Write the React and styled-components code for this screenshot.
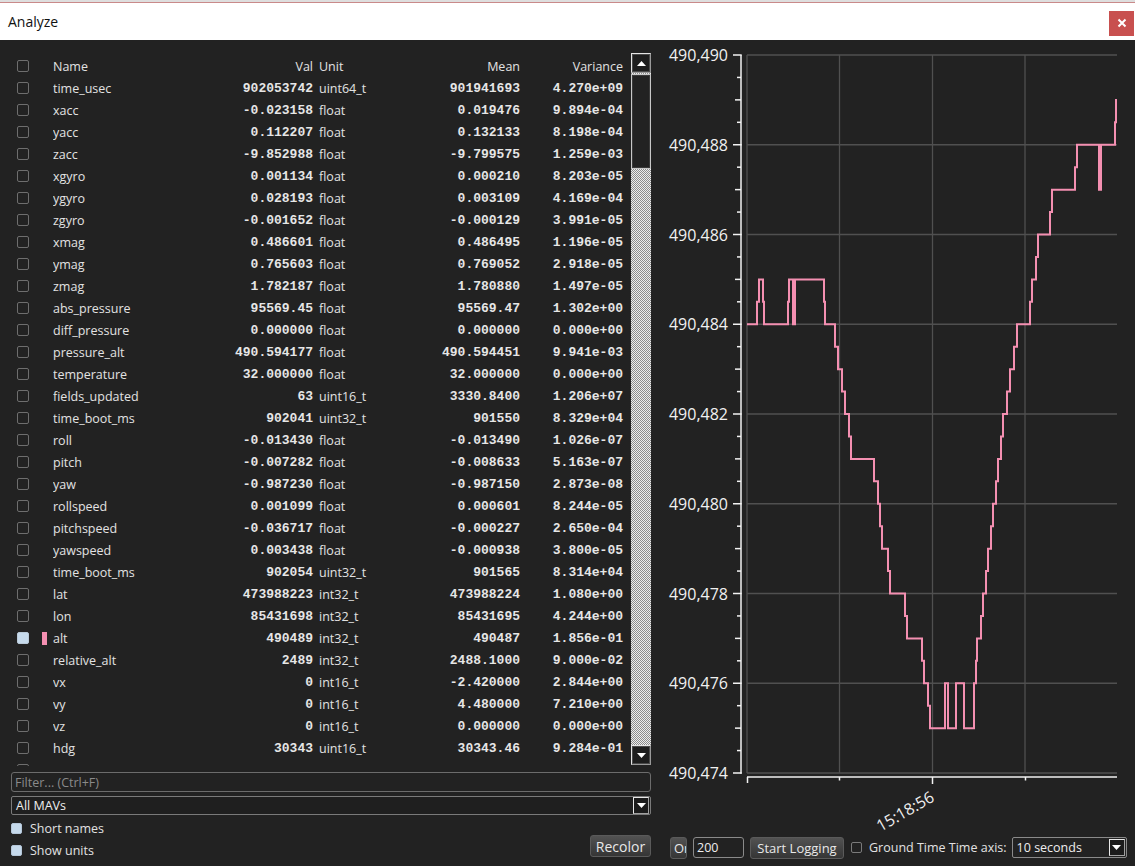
import React from "react";
import styled, { createGlobalStyle } from "styled-components";

const Global = createGlobalStyle`
  html, body { margin: 0; padding: 0; background: #222222; }
  body { width: 1135px; height: 866px; overflow: hidden; font-family: "Open Sans", "Noto Sans", sans-serif; }
  * { box-sizing: border-box; }
`;

const Window = styled.div`
  width: 1135px;
  height: 866px;
  display: flex;
  flex-direction: column;
  background: #222222;
`;

const TitleBar = styled.div`
  height: 40px;
  flex: 0 0 40px;
  background: #ffffff;
  border-top: 2px solid #dedede;
  box-shadow: inset 0 1px 0 #c98a8a;
  display: flex;
  align-items: center;
  justify-content: space-between;
  padding: 0 1px 0 8px;
`;

const Title = styled.span`
  font-size: 14px;
  color: #111;
  margin-top: 1px;
`;

const CloseBtn = styled.div`
  width: 25px;
  height: 25px;
  background: #c8504f;
  display: flex;
  align-items: center;
  justify-content: center;
  margin-top: 4px;
`;

const Main = styled.div`
  flex: 1;
  display: flex;
  min-height: 0;
`;

const LeftPanel = styled.div`
  width: 660px;
  flex: 0 0 660px;
  padding: 13px 9px 0 11px;
  display: flex;
  flex-direction: column;
`;

const TableArea = styled.div`
  height: 713px;
  flex: 0 0 713px;
  display: flex;
`;

const Rows = styled.div`
  flex: 1;
  overflow: hidden;
  padding-top: 2px;
`;

const Row = styled.div`
  height: 22px;
  display: grid;
  grid-template-columns: 12px 13px 5px 6px 180px 80px 6px 80px 121px 103px;
  align-items: center;
  padding-left: 6px;
  color: #e2e2e2;
  font-size: 12.5px;
  white-space: nowrap;
`;

const Check = styled.span`
  width: 12px;
  height: 12px;
  border-radius: 2px;
  border: 1px solid ${p => (p.$on ? "#b9c9d8" : "#6e6e6e")};
  background: ${p => (p.$on ? "#c6daec" : "transparent")};
  grid-column: 1;
`;

const Swatch = styled.span`
  grid-column: 3;
  width: 5px;
  height: 13px;
  background: ${p => p.$color || "transparent"};
`;

const NameCell = styled.span`
  grid-column: 5;
  overflow: hidden;
`;

const NumCell = styled.span`
  grid-column: ${p => p.$col};
  text-align: right;
  font-family: "Liberation Mono", "Courier New", monospace;
  font-weight: bold;
  font-size: 13px;
  color: #e6e6e6;
`;

const HeadRight = styled.span`
  grid-column: ${p => p.$col};
  text-align: right;
`;

const UnitCell = styled.span`
  grid-column: 8;
`;

const ScrollBar = styled.div`
  width: 20px;
  flex: 0 0 20px;
  display: flex;
  flex-direction: column;
  padding-bottom: 1px;
`;

const ScrollBtn = styled.div`
  height: 20px;
  flex: 0 0 20px;
  background: #1d1d1d;
  border: 1px solid #e4e4e4;
  border-right-color: #9a9a9a;
  border-bottom-color: #9a9a9a;
  box-shadow: inset 0 0 0 1px #4a4a4a;
  display: flex;
  align-items: center;
  justify-content: center;
`;

const Track = styled.div`
  flex: 1;
  display: flex;
  flex-direction: column;
  background: repeating-conic-gradient(#ededed 0 25%, #8c8c8c 0 50%) 0 0 / 2px 2px;
`;

const Thumb = styled.div`
  height: 95px;
  margin-top: 1px;
  background: #222;
  border: 1px solid #c8c8c8;
  box-shadow: inset 0 0 0 1px #3a3a3a;
`;

const FilterInput = styled.div`
  margin-top: 6px;
  height: 20px;
  border: 1px solid #6c6c6c;
  border-radius: 3px;
  padding: 0 3px;
  font-size: 12.5px;
  color: #8a8a8a;
  display: flex;
  align-items: center;
`;

const Combo = styled.div`
  margin-top: 4px;
  height: 19px;
  border: 1px solid #7a7a7a;
  border-radius: 2px;
  background: #1f1f1f;
  padding: 0 1px 0 4px;
  font-size: 12.5px;
  color: #eeeeee;
  display: flex;
  align-items: center;
  justify-content: space-between;
`;

const ArrowBox = styled.span`
  width: 16px;
  height: 17px;
  border: 1px solid #e8e8e8;
  border-right-color: #a0a0a0;
  border-bottom-color: #a0a0a0;
  background: #1b1b1b;
  display: flex;
  align-items: center;
  justify-content: center;
`;

const BottomArea = styled.div`
  margin-top: 2px;
  display: flex;
  align-items: flex-end;
  justify-content: space-between;
`;

const CheckList = styled.div`
  display: flex;
  flex-direction: column;
`;

const CheckRow = styled.label`
  height: 22px;
  display: flex;
  align-items: center;
  gap: 8px;
  font-size: 12.5px;
  color: #e2e2e2;
`;

const SmallCheck = styled.span`
  width: 11px;
  height: 11px;
  border-radius: 2px;
  border: 1px solid ${p => (p.$on ? "#b4c6d8" : "#7a7a7a")};
  background: ${p => (p.$on ? "#c6daec" : "transparent")};
`;

const Button = styled.div`
  height: 22px;
  width: ${p => p.$w}px;
  flex: 0 0 ${p => p.$w}px;
  border: 1px solid #5a5a5a;
  border-radius: 3px;
  background: linear-gradient(#525252, #353535);
  color: #e8e8e8;
  font-size: ${p => p.$fs || 13}px;
  display: flex;
  align-items: center;
  justify-content: ${p => (p.$left ? "flex-start" : "center")};
  padding-left: ${p => (p.$left ? 3 : 0)}px;
  overflow: hidden;
  white-space: nowrap;
  margin-bottom: ${p => p.$mb || 0}px;
`;

const RightPanel = styled.div`
  flex: 1;
  display: flex;
  flex-direction: column;
`;

const Chart = styled.svg`
  display: block;
  width: 475px;
  height: 792px;
  flex: 0 0 792px;
  font-family: "Open Sans", "Noto Sans", sans-serif;
`;

const Controls = styled.div`
  margin-top: 5px;
  height: 21px;
  display: flex;
  align-items: center;
  padding-left: 10px;
  font-size: 12.5px;
  color: #e2e2e2;
  white-space: nowrap;
`;

const NumInput = styled.div`
  width: 51px;
  height: 21px;
  margin-left: 6px;
  border: 1px solid #8a8a8a;
  border-radius: 3px;
  padding-left: 3px;
  display: flex;
  align-items: center;
  color: #eeeeee;
`;

const Select = styled.div`
  width: 115px;
  height: 21px;
  margin-left: 5px;
  border: 1px solid #8a8a8a;
  border-radius: 2px;
  padding: 0 1px 0 4px;
  display: flex;
  align-items: center;
  justify-content: space-between;
  color: #eeeeee;
`;

const Label = styled.span`
  margin-left: 7px;
`;

const rows = [
  ["time_usec", "902053742", "uint64_t", "901941693", "4.270e+09"],
  ["xacc", "-0.023158", "float", "0.019476", "9.894e-04"],
  ["yacc", "0.112207", "float", "0.132133", "8.198e-04"],
  ["zacc", "-9.852988", "float", "-9.799575", "1.259e-03"],
  ["xgyro", "0.001134", "float", "0.000210", "8.203e-05"],
  ["ygyro", "0.028193", "float", "0.003109", "4.169e-04"],
  ["zgyro", "-0.001652", "float", "-0.000129", "3.991e-05"],
  ["xmag", "0.486601", "float", "0.486495", "1.196e-05"],
  ["ymag", "0.765603", "float", "0.769052", "2.918e-05"],
  ["zmag", "1.782187", "float", "1.780880", "1.497e-05"],
  ["abs_pressure", "95569.45", "float", "95569.47", "1.302e+00"],
  ["diff_pressure", "0.000000", "float", "0.000000", "0.000e+00"],
  ["pressure_alt", "490.594177", "float", "490.594451", "9.941e-03"],
  ["temperature", "32.000000", "float", "32.000000", "0.000e+00"],
  ["fields_updated", "63", "uint16_t", "3330.8400", "1.206e+07"],
  ["time_boot_ms", "902041", "uint32_t", "901550", "8.329e+04"],
  ["roll", "-0.013430", "float", "-0.013490", "1.026e-07"],
  ["pitch", "-0.007282", "float", "-0.008633", "5.163e-07"],
  ["yaw", "-0.987230", "float", "-0.987150", "2.873e-08"],
  ["rollspeed", "0.001099", "float", "0.000601", "8.244e-05"],
  ["pitchspeed", "-0.036717", "float", "-0.000227", "2.650e-04"],
  ["yawspeed", "0.003438", "float", "-0.000938", "3.800e-05"],
  ["time_boot_ms", "902054", "uint32_t", "901565", "8.314e+04"],
  ["lat", "473988223", "int32_t", "473988224", "1.080e+00"],
  ["lon", "85431698", "int32_t", "85431695", "4.244e+00"],
  ["alt", "490489", "int32_t", "490487", "1.856e-01", true],
  ["relative_alt", "2489", "int32_t", "2488.1000", "9.000e-02"],
  ["vx", "0", "int16_t", "-2.420000", "2.844e+00"],
  ["vy", "0", "int16_t", "4.480000", "7.210e+00"],
  ["vz", "0", "int16_t", "0.000000", "0.000e+00"],
  ["hdg", "30343", "uint16_t", "30343.46", "9.284e-01"],
];

const PINK = "#f48fb1";
const yOf = v => 773 - (v - 474) * 44.875;

const steps = [
  [757, 484.5], [759, 485], [763, 484.5], [764, 484],
  [788, 484.5], [789, 485], [793, 484], [795, 485],
  [824, 484.5], [825, 484],
  [835, 483.5], [838, 483], [842, 482.5], [845, 482], [849, 481.5], [851, 481],
  [874, 480.5], [878, 480], [880, 479.5], [882, 479], [888, 478.5], [890, 478],
  [905, 477.5], [907, 477], [922, 476.5], [924, 476], [928, 475.5], [930, 475],
  [945, 476], [948, 475], [956, 476], [964, 475],
  [974, 476], [976, 476.5], [977, 477], [981, 477.5], [983, 478], [986, 478.5], [988, 479],
  [991, 479.5], [993, 480], [996, 480.5], [998, 481], [1001, 481.5], [1003, 482],
  [1007, 482.5], [1010, 483], [1014, 483.5], [1017, 484],
  [1030, 484.5], [1032, 485], [1036, 485.5], [1038, 486], [1050, 486.5], [1052, 487],
  [1075, 487.5], [1077, 488], [1099, 487], [1101, 488], [1115, 488.5], [1116, 489],
];

const curve =
  `M747 ${yOf(484)}` + steps.map(([x, v]) => ` H${x} V${yOf(v)}`).join("") + " H1117";

const majors = [490, 488, 486, 484, 482, 480, 478, 476, 474];
const vGrid = [747, 839.5, 932.5, 1025];

function ChartView() {
  const minor = [];
  for (let v = 474; v < 490; v += 0.5) {
    const isMajor = Math.abs(v - Math.round(v)) < 0.01 && Math.round(v) % 2 === 0;
    if (isMajor) continue;
    const mid = Math.abs(v - Math.round(v)) < 0.01;
    minor.push(
      <line key={v} x1={mid ? 735 : 737} x2={741} y1={yOf(v)} y2={yOf(v)} stroke="#f2f2f2" strokeWidth="1.5" />
    );
  }
  return (
    <Chart viewBox="660 40 475 792">
      {majors.map(v => (
        <line key={"g" + v} x1={747} x2={1117} y1={yOf(v)} y2={yOf(v)} stroke="#505050" strokeWidth="1.3" />
      ))}
      {vGrid.map(x => (
        <line key={"v" + x} x1={x} x2={x} y1={55} y2={773} stroke="#505050" strokeWidth="1.3" />
      ))}
      <line x1={741} x2={741} y1={55} y2={773.7} stroke="#f2f2f2" strokeWidth="1.5" />
      {majors.map(v => (
        <line key={"t" + v} x1={733} x2={741.7} y1={yOf(v)} y2={yOf(v)} stroke="#f2f2f2" strokeWidth="1.5" />
      ))}
      {minor}
      {majors.map(v => (
        <text key={"l" + v} x={728} y={yOf(v) + 6} textAnchor="end" fontSize="16" fill="#f0f0f0">
          {"490," + String(v)}
        </text>
      ))}
      <line x1={747} x2={1117} y1={777} y2={777} stroke="#f2f2f2" strokeWidth="1.5" />
      <line x1={747.5} x2={747.5} y1={777} y2={783} stroke="#f2f2f2" strokeWidth="1.5" />
      <line x1={839.5} x2={839.5} y1={777} y2={780.5} stroke="#f2f2f2" strokeWidth="1.5" />
      <line x1={932.5} x2={932.5} y1={777} y2={784} stroke="#f2f2f2" strokeWidth="1.5" />
      <line x1={1025.5} x2={1025.5} y1={777} y2={780.5} stroke="#f2f2f2" strokeWidth="1.5" />
      <text x={905} y={817} textAnchor="middle" fontSize="16" fill="#f0f0f0" transform="rotate(-30 905 811)">
        15:18:56
      </text>
      <path d={curve} fill="none" stroke={PINK} strokeWidth="2" strokeLinejoin="miter" />
    </Chart>
  );
}

const TriUp = () => (
  <svg width="9" height="5" viewBox="0 0 9 5"><polygon points="0,5 9,5 4.5,0" fill="#ffffff" /></svg>
);
const TriDown = () => (
  <svg width="9" height="5" viewBox="0 0 9 5"><polygon points="0,0 9,0 4.5,5" fill="#ffffff" /></svg>
);

export default function App() {
  return (
    <Window>
      <Global />
      <TitleBar>
        <Title>Analyze</Title>
        <CloseBtn>
          <svg width="10" height="10" viewBox="0 0 10 10">
            <path d="M1.5 1.5 L8.5 8.5 M8.5 1.5 L1.5 8.5" stroke="#ffffff" strokeWidth="2" />
          </svg>
        </CloseBtn>
      </TitleBar>
      <Main>
        <LeftPanel>
          <TableArea>
            <Rows>
              <Row>
                <Check />
                <NameCell>Name</NameCell>
                <HeadRight $col={6}>Val</HeadRight>
                <UnitCell>Unit</UnitCell>
                <HeadRight $col={9}>Mean</HeadRight>
                <HeadRight $col={10}>Variance</HeadRight>
              </Row>
              {rows.map((r, i) => (
                <Row key={i}>
                  <Check $on={r[5]} />
                  <Swatch $color={r[5] ? PINK : null} />
                  <NameCell>{r[0]}</NameCell>
                  <NumCell $col={6}>{r[1]}</NumCell>
                  <UnitCell>{r[2]}</UnitCell>
                  <NumCell $col={9}>{r[3]}</NumCell>
                  <NumCell $col={10}>{r[4]}</NumCell>
                </Row>
              ))}
              <Row>
                <Check />
              </Row>
            </Rows>
            <ScrollBar>
              <ScrollBtn><TriUp /></ScrollBtn>
              <Track><Thumb /></Track>
              <ScrollBtn><TriDown /></ScrollBtn>
            </ScrollBar>
          </TableArea>
          <FilterInput>Filter... (Ctrl+F)</FilterInput>
          <Combo>
            All MAVs
            <ArrowBox><TriDown /></ArrowBox>
          </Combo>
          <BottomArea>
            <CheckList>
              <CheckRow><SmallCheck $on />Short names</CheckRow>
              <CheckRow><SmallCheck $on />Show units</CheckRow>
            </CheckList>
            <Button $w={61} $fs={14} $mb={4}>Recolor</Button>
          </BottomArea>
        </LeftPanel>
        <RightPanel>
          <ChartView />
          <Controls>
            <Button $w={17} $left>On</Button>
            <NumInput>200</NumInput>
            <Button $w={94} style={{ marginLeft: 6 }}>Start Logging</Button>
            <SmallCheck style={{ marginLeft: 7 }} />
            <Label>Ground Time Time axis:</Label>
            <Select>
              10 seconds
              <ArrowBox><TriDown /></ArrowBox>
            </Select>
          </Controls>
        </RightPanel>
      </Main>
    </Window>
  );
}
